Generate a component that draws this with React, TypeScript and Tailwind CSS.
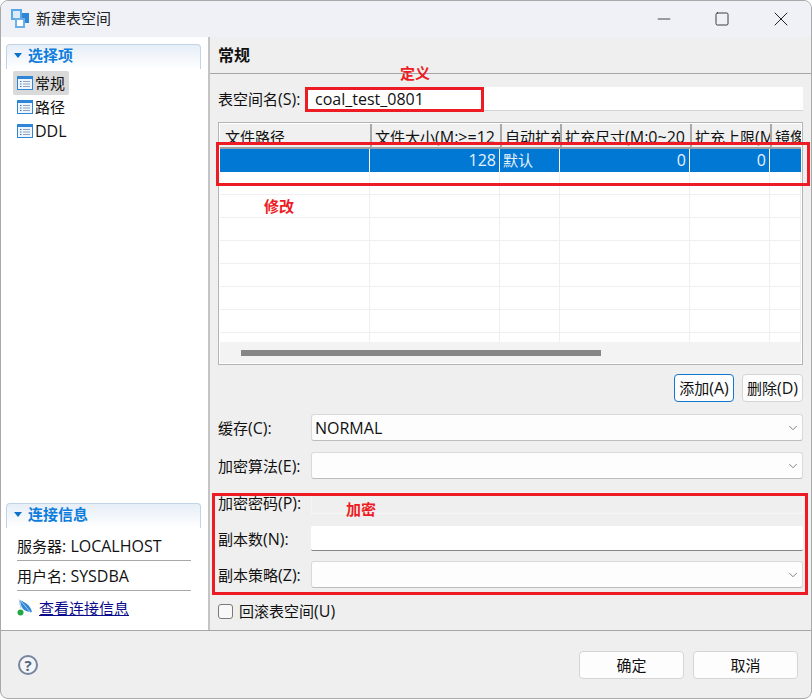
import type { ReactNode } from 'react';
import { ChevronDown, Minus, Square, X } from 'lucide-react';

const FONT = "font-['Open_Sans','Noto_Sans_CJK_SC',sans-serif]";

const COLUMNS = [
  { label: '文件路径', width: 'w-[150px]', value: '', align: 'text-right' },
  { label: '文件大小(M:>=12', width: 'w-[130px]', value: '128', align: 'text-right' },
  { label: '自动扩充', width: 'w-[60px]', value: '默认', align: 'text-left' },
  { label: '扩充尺寸(M:0~20', width: 'w-[130px]', value: '0', align: 'text-right' },
  { label: '扩充上限(M', width: 'w-[80px]', value: '0', align: 'text-right' },
  { label: '镜像', width: 'flex-1', value: '', align: 'text-left' },
];

// latin runs sit at 16px, chinese runs at 15px, like the native dialog font
function Txt({ children }: { children: string }) {
  return (
    <span className="text-[16px]">
      {children.split(/([\u4e00-\u9fff]+)/).map((part, i) =>
        i % 2 === 1 ? (
          <span key={i} className="text-[15px]">
            {part}
          </span>
        ) : (
          part
        ),
      )}
    </span>
  );
}

function AppIcon() {
  return (
    <svg width="20" height="20" viewBox="0 0 20 20" className="shrink-0">
      <rect x="9" y="4" width="9" height="10" fill="#2f86d6" />
      <rect x="1" y="1" width="9" height="9" fill="#dcebf9" stroke="#5aa7e6" strokeWidth="2" />
      <rect x="5" y="10" width="8" height="8" fill="#ffffff" stroke="#6cb0ea" strokeWidth="2" />
    </svg>
  );
}

function PageIcon() {
  return (
    <svg width="16" height="14" viewBox="0 0 16 14" className="shrink-0">
      <rect x="0.5" y="0.5" width="15" height="13" fill="#eef5fc" stroke="#2f86d6" />
      <rect x="1" y="1" width="14" height="2" fill="#2f86d6" />
      <path d="M3 5.5h1.5M3 8h1.5M3 10.5h1.5" stroke="#4a6f94" />
      <path d="M6 5.5h7M6 8h7M6 10.5h7" stroke="#8ea4ba" />
    </svg>
  );
}

function SectionHeader({ title }: { title: string }) {
  return (
    <div className="h-[25px] rounded-t-[4px] border border-b-0 border-[#c3d3e4] bg-gradient-to-b from-[#e6eef7] to-white flex items-center pl-[7px] pb-[3px] gap-[6px]">
      <svg width="8" height="5" viewBox="0 0 8 5">
        <path d="M0 0h8L4 5z" fill="#0a72c9" />
      </svg>
      <span className="text-[15px] font-bold text-[#0f7ddb]">{title}</span>
    </div>
  );
}

function NavItem({ label, active }: { label: string; active?: boolean }) {
  return (
    <div className={`h-[24px] w-[56px] flex items-center gap-[2px] pl-[4px] rounded-[2px] leading-[20px] text-[#111] ${active ? 'bg-[#d9d9d9]' : ''}`}>
      <PageIcon />
      <Txt>{label}</Txt>
    </div>
  );
}

function FieldRow({ label, children, className, labelWidth = 'w-[93px]' }: { label: string; children: ReactNode; className: string; labelWidth?: string }) {
  return (
    <div className={`flex items-center ${className}`}>
      <div className={`${labelWidth} shrink-0 text-[#111] whitespace-nowrap`}>
        <Txt>{label}</Txt>
      </div>
      {children}
    </div>
  );
}

function Combo({ value }: { value?: string }) {
  return (
    <div className="flex-1 h-full bg-[#fdfdfd] rounded-[3px] border border-[#d9d9d9] border-b-[#bdbdbd] flex items-center justify-between pl-[3px] pr-[2px]">
      <span className="text-[16px] text-[#111]">{value}</span>
      <ChevronDown size={14} strokeWidth={1.2} className="text-[#555]" />
    </div>
  );
}

function Button({ label, className }: { label: string; className: string }) {
  return (
    <div className={`h-[28px] rounded-[4px] bg-[#fdfdfd] border flex items-center justify-center text-[#111] whitespace-nowrap ${className}`}>
      <Txt>{label}</Txt>
    </div>
  );
}

function FileTable() {
  return (
    <div className="mt-[11px] h-[243px] border border-[#b4b4b4] bg-white p-px flex flex-col overflow-hidden">
      <div className="h-[25px] flex bg-[#f0f0f0] border-b-2 border-[#a0a0a0] pl-[2px] overflow-hidden shrink-0">
        {COLUMNS.map((c) => (
          <div key={c.label} className={`${c.width} shrink-0 border-r-2 border-[#a8a8a8] last:border-r-0 pl-[3px] pt-[3px] leading-[20px] text-[#111] whitespace-nowrap overflow-hidden`}>
            <Txt>{c.label}</Txt>
          </div>
        ))}
      </div>
      <div className="h-[23px] flex bg-[#0078d4] shrink-0">
        {COLUMNS.map((c) => (
          <div key={c.label} className={`${c.width} shrink-0 border-r border-white last:border-r-0 px-[3px] leading-[23px] text-[#e8f2fb] ${c.align}`}>
            <Txt>{c.value}</Txt>
          </div>
        ))}
      </div>
      <div className="flex-1 overflow-hidden">
        {[0, 1, 2, 3, 4, 5, 6, 7].map((row) => (
          <div key={row} className="h-[23px] flex border-b border-[#efefef]">
            {COLUMNS.map((c) => (
              <div key={c.label} className={`${c.width} shrink-0 border-r border-[#efefef]`} />
            ))}
          </div>
        ))}
      </div>
      <div className="h-[21px] bg-[#f3f3f3] shrink-0 flex items-center pl-[21px]">
        <div className="h-[6px] w-[360px] bg-[#868686]" />
      </div>
    </div>
  );
}

export default function App() {
  return (
    <div className={`${FONT} relative w-[812px] h-[699px] overflow-hidden rounded-[8px] border border-[#a9a9a9] bg-[#efefef] flex flex-col`}>
      {/* Title bar */}
      <div className="h-[36px] shrink-0 bg-[#eff1f7] flex items-center pl-[10px]">
        <AppIcon />
        <span className="ml-[5px] -mt-[2px] text-[15px] text-[#222]">新建表空间</span>
        <div className="ml-auto flex items-center text-[#222] -mt-[1px]">
          <div className="w-[58px] pr-[2px] flex justify-center"><Minus size={20} strokeWidth={1} /></div>
          <div className="w-[58px] pr-[2px] flex justify-center"><Square size={16} strokeWidth={1.3} /></div>
          <div className="w-[58px] mr-[1px] flex justify-center"><X size={24} strokeWidth={1} /></div>
        </div>
      </div>

      <div className="h-[594px] shrink-0 flex border-b border-[#a6a6a6]">
        {/* Left column */}
        <div className="w-[209px] shrink-0 bg-white border-r-2 border-[#c4c4c4] flex flex-col justify-between pt-[7px] pl-[5px] pr-[7px] pb-[5px]">
          <div>
            <SectionHeader title="选择项" />
            <div className="mt-[2px] pl-[7px]">
              <NavItem label="常规" active />
              <NavItem label="路径" />
              <NavItem label="DDL" />
            </div>
          </div>
          <div>
            <SectionHeader title="连接信息" />
            <div className="pl-[11px] pr-[10px] text-[#111]">
              <div className="h-[33px] pt-[8px] leading-[20px] border-b border-[#a8a8a8]"><Txt>服务器: LOCALHOST</Txt></div>
              <div className="h-[30px] pt-[5px] leading-[20px] border-b border-[#a8a8a8]"><Txt>用户名: SYSDBA</Txt></div>
              <div className="h-[34px] flex items-center gap-[6px]">
                <svg width="16" height="18" viewBox="0 0 16 18" className="shrink-0">
                  <path d="M3 1c0 3 1 6 3 9 2 2 5 3 9 3-1-5-5-9-12-12z" fill="#2f86d6" />
                  <path d="M2 0.5l2 9M3 1l11 13" stroke="#a9cdec" strokeWidth="1" fill="none" />
                  <circle cx="3.5" cy="13.5" r="3" fill="#22a844" />
                </svg>
                <span className="text-[15px] text-[#0a0a8c] underline">查看连接信息</span>
              </div>
            </div>
          </div>
        </div>

        {/* Right column */}
        <div className="flex-1 min-w-0 flex flex-col">
          <div className="h-[37px] shrink-0 border-b border-[#a6a6a6] pl-[8px] flex items-center text-[16px] font-bold text-[#111]">
            常规
          </div>
          <div className="flex-1 px-[8px] pt-[13px]">
            <FieldRow label="表空间名(S):" labelWidth="w-[87px]" className="h-[24px]">
              <div className="flex-1 h-full bg-white border-b border-[#d4d4d4] pl-[10px] text-[16px] leading-[24px] text-[#111]">
                coal_test_0801
              </div>
            </FieldRow>
            <FileTable />
            <div className="mt-[9px] flex justify-end gap-[8px]">
              <Button label="添加(A)" className="w-[60px] border-[#0f78d0]" />
              <Button label="删除(D)" className="w-[61px] border-[#d5d5d5]" />
            </div>
            <FieldRow label="缓存(C):" className="mt-[12px] h-[27px]"><Combo value="NORMAL" /></FieldRow>
            <FieldRow label="加密算法(E):" className="mt-[11px] h-[27px]"><Combo /></FieldRow>
            <FieldRow label="加密密码(P):" className="mt-[13px] h-[22px]">
              <div className="flex-1 h-full border border-[#f6f6f6]" />
            </FieldRow>
            <FieldRow label="副本数(N):" className="mt-[12px] h-[25px]">
              <div className="flex-1 h-full bg-white border-b border-[#858585] rounded-[2px]" />
            </FieldRow>
            <FieldRow label="副本策略(Z):" className="mt-[10px] h-[27px]"><Combo /></FieldRow>
            <div className="mt-[11px] flex items-center gap-[6px] text-[#111]">
              <div className="w-[15px] h-[15px] rounded-[3px] border border-[#7a7a7a] bg-[#f8f8f8]" />
              <Txt>回滚表空间(U)</Txt>
            </div>
          </div>
        </div>
      </div>

      {/* Footer */}
      <div className="flex-1 flex items-center pl-[17px] pr-[13px]">
        <svg width="20" height="20" viewBox="0 0 20 20">
          <circle cx="10" cy="10" r="9" fill="#f4f5f8" stroke="#76859b" strokeWidth="2" />
          <text x="10" y="15.5" textAnchor="middle" fontSize="15" fontWeight="700" fill="#55657c">?</text>
        </svg>
        <div className="ml-auto flex gap-[9px]">
          <Button label="确定" className="w-[105px] border-[#d5d5d5]" />
          <Button label="取消" className="w-[105px] border-[#d5d5d5]" />
        </div>
      </div>

      {/* Red annotations drawn over the dialog */}
      <div className="absolute left-[304px] top-[86px] w-[179px] h-[25px] border-[3px] border-[#ed1c24]" />
      <div className="absolute left-[215px] top-[141px] w-[594px] h-[44px] border-[3px] border-[#ed1c24]" />
      <div className="absolute left-[211px] top-[492px] w-[596px] h-[102px] border-[3px] border-[#ed1c24]" />
      <span className="absolute left-[399px] top-[61px] text-[15px] font-bold text-[#ed1c24]">定义</span>
      <span className="absolute left-[263px] top-[194px] text-[15px] font-bold text-[#ed1c24]">修改</span>
      <span className="absolute left-[345px] top-[497px] text-[15px] font-bold text-[#ed1c24]">加密</span>
    </div>
  );
}
